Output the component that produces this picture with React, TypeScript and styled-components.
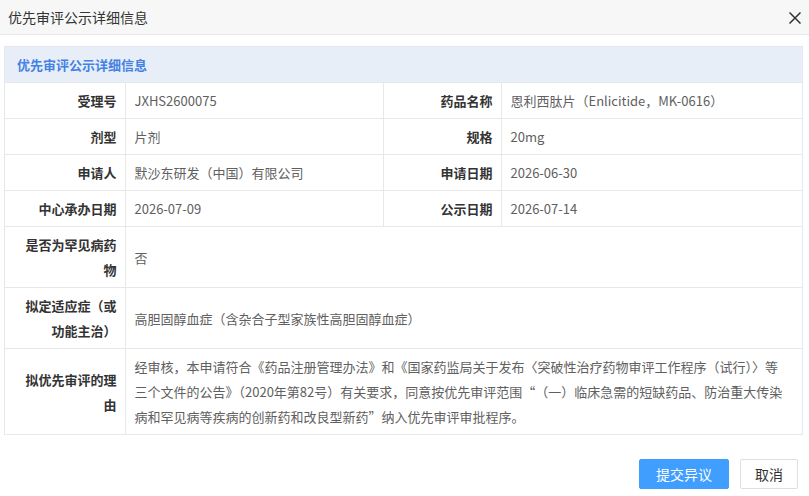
import * as React from "react";
import styled, { createGlobalStyle } from "styled-components";

const GlobalStyle = createGlobalStyle`
  html, body {
    margin: 0;
    padding: 0;
    background: #fff;
  }
  body {
    font-family: "Noto Sans CJK SC", "Noto Sans", sans-serif;
    color: #333;
  }
`;

const Dialog = styled.div`
  width: 809px;
  height: 496px;
  display: flex;
  flex-direction: column;
  background: #fff;
  overflow: hidden;
`;

const TitleBar = styled.header`
  height: 35px;
  box-sizing: border-box;
  display: flex;
  align-items: center;
  justify-content: space-between;
  padding: 0 6px 0 8px;
  background: #f7f7f7;
  border-bottom: 1px solid #e8e8e8;
  font-size: 14px;
  color: #333;
`;

const CloseButton = styled.button`
  width: 16px;
  height: 16px;
  margin-top: 2px;
  padding: 0;
  border: 0;
  background: none;
  cursor: pointer;
  display: flex;
  align-items: center;
  justify-content: center;
`;

const Body = styled.div`
  flex: 1;
  padding: 11px 6px 0 4px;
`;

const Panel = styled.section`
  border: 1px solid #e4e7ed;
  border-bottom: 0;
`;

const PanelHead = styled.div`
  height: 35px;
  display: flex;
  align-items: center;
  padding-left: 12px;
  background: #e8eef8;
  color: #4381e2;
  font-size: 13px;
  font-weight: bold;
`;

const Table = styled.table`
  width: 100%;
  border-collapse: collapse;
  table-layout: fixed;
  font-size: 13px;
`;

const Label = styled.th`
  padding: 5px 8px 5px 12px;
  border: 1px solid #e8e8e8;
  border-left: 0;
  text-align: right;
  font-weight: bold;
  color: #333;
  line-height: 25px;
  vertical-align: middle;
`;

const Value = styled.td`
  padding: 5px 18px 5px 9px;
  border: 1px solid #e8e8e8;
  color: #606060;
  line-height: 25px;
  vertical-align: middle;
  &:last-child {
    border-right: 0;
  }
`;

// full-width curly quotes, as the CJK face sets them
const Quote = styled.span<{ $open?: boolean }>`
  display: inline-block;
  width: 13px;
  text-align: ${({ $open }) => ($open ? "right" : "left")};
`;

const Footer = styled.footer`
  display: flex;
  justify-content: flex-end;
  gap: 11px;
  padding: 0 11px 7px 0;
`;

const Button = styled.button<{ $primary?: boolean }>`
  height: 30px;
  padding: 0 ${({ $primary }) => ($primary ? "16px" : "14px")};
  font-family: inherit;
  font-size: 14px;
  border-radius: 2px;
  cursor: pointer;
  border: 1px solid ${({ $primary }) => ($primary ? "#409eff" : "#dcdfe6")};
  background: ${({ $primary }) => ($primary ? "#409eff" : "#fff")};
  color: ${({ $primary }) => ($primary ? "#fff" : "#333")};
`;

const pairs: [string, string, string, string][] = [
  ["受理号", "JXHS2600075", "药品名称", "恩利西肽片（Enlicitide，MK-0616）"],
  ["剂型", "片剂", "规格", "20mg"],
  ["申请人", "默沙东研发（中国）有限公司", "申请日期", "2026-06-30"],
  ["中心承办日期", "2026-07-09", "公示日期", "2026-07-14"],
];

const reason = (
  <>
    经审核，本申请符合《药品注册管理办法》和《国家药监局关于发布〈突破性治疗药物审评工作程序（试行）〉等三个文件的公告》（2020年第82号）有关要求，同意按优先审评范围
    <Quote $open>“</Quote>（一）临床急需的短缺药品、防治重大传染病和罕见病等疾病的创新药和改良型新药
    <Quote>”</Quote>纳入优先审评审批程序。
  </>
);

const wide: [string, React.ReactNode][] = [
  ["是否为罕见病药物", "否"],
  ["拟定适应症（或功能主治）", "高胆固醇血症（含杂合子型家族性高胆固醇血症）"],
  ["拟优先审评的理由", reason],
];

const App: React.FC = () => {
  return (
    <>
      <GlobalStyle />
      <Dialog>
        <TitleBar>
          <span>优先审评公示详细信息</span>
          <CloseButton aria-label="关闭">
            <svg width="12" height="12" viewBox="0 0 12 12">
              <path d="M0.5 0.5L11.5 11.5M11.5 0.5L0.5 11.5" stroke="#333" strokeWidth="1.5" />
            </svg>
          </CloseButton>
        </TitleBar>
        <Body>
          <Panel>
            <PanelHead>优先审评公示详细信息</PanelHead>
            <Table>
              <colgroup>
                <col style={{ width: 120 }} />
                <col style={{ width: 258 }} />
                <col style={{ width: 118 }} />
                <col />
              </colgroup>
              <tbody>
                {pairs.map(([l1, v1, l2, v2]) => (
                  <tr key={l1}>
                    <Label>{l1}</Label>
                    <Value>{v1}</Value>
                    <Label>{l2}</Label>
                    <Value>{v2}</Value>
                  </tr>
                ))}
                {wide.map(([l, v]) => (
                  <tr key={l}>
                    <Label>{l}</Label>
                    <Value colSpan={3}>{v}</Value>
                  </tr>
                ))}
              </tbody>
            </Table>
          </Panel>
        </Body>
        <Footer>
          <Button $primary>提交异议</Button>
          <Button>取消</Button>
        </Footer>
      </Dialog>
    </>
  );
};

export default App;
